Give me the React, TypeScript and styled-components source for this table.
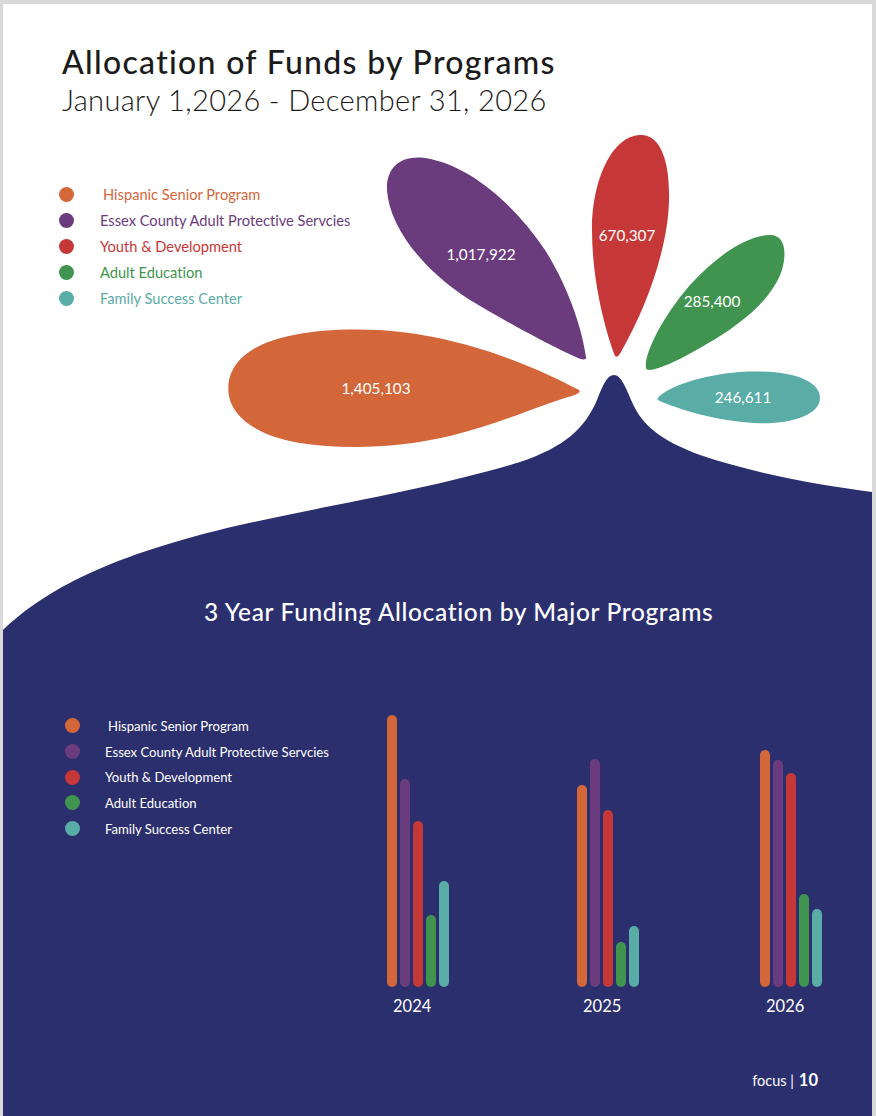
import React from 'react';
import styled, { createGlobalStyle } from 'styled-components';

const NAVY = '#2c2f6e';

const GlobalStyle = createGlobalStyle`
  html, body { margin: 0; padding: 0; background: #d9d9d9; overflow: hidden; }
  body { font-family: Lato, "Open Sans", sans-serif; font-variant-ligatures: none; }
  #root { width: 876px; height: 1116px; }
`;

type Program = { name: string; color: string; indent: number };

const programs: Program[] = [
  { name: 'Hispanic Senior Program', color: '#d3673a', indent: 3 },
  { name: 'Essex County Adult Protective Servcies', color: '#6a3c7d', indent: 0 },
  { name: 'Youth & Development', color: '#c63737', indent: 0 },
  { name: 'Adult Education', color: '#41944f', indent: 0 },
  { name: 'Family Success Center', color: '#5aaca7', indent: 0 },
];

const years = [
  { year: '2024', gap: 0, heights: [272, 208, 166, 72, 106] },
  { year: '2025', gap: 128, heights: [202, 228, 177, 45, 61] },
  { year: '2026', gap: 121, heights: [237, 227, 214, 93, 78] },
];

const Page = styled.div`
  margin: 4px 0 0 3px;
  width: 869px;
  height: 1112px;
  background: #ffffff;
  display: flex;
  flex-direction: column;
  overflow: hidden;
`;

const Header = styled.header`
  box-sizing: border-box;
  height: 126px;
  padding: 39px 0 0 59px;
  color: #1b1b1b;
`;

const Title = styled.h1`
  margin: 0;
  font-size: 32px;
  line-height: 38px;
  font-weight: 500;
  letter-spacing: 1.3px;
  white-space: nowrap;
`;

const Subtitle = styled.h2`
  margin: 1px 0 0;
  font-size: 29px;
  line-height: 35px;
  font-weight: 300;
  letter-spacing: 0.35px;
  white-space: nowrap;
`;

const Stage = styled.section`
  display: grid;
  grid-template-areas: 'stack';
  height: 520px;
  & > * { grid-area: stack; }
`;

const FlowerSvg = styled.svg`
  display: block;
  width: 869px;
  height: 520px;
`;

const Legend = styled.ul<{ $size: number; $rowH: number; $gap: number }>`
  list-style: none;
  margin: 0;
  padding: 0;
  align-self: start;
  justify-self: start;
  display: flex;
  flex-direction: column;
  font-size: ${p => p.$size}px;
  & > li {
    height: ${p => p.$rowH}px;
    gap: ${p => p.$gap}px;
  }
`;

const TopLegend = styled(Legend)`
  margin: 52px 0 0 56px;
`;

const LegendItem = styled.li<{ $color: string; $indent: number; $light?: boolean }>`
  display: flex;
  align-items: center;
  color: ${p => (p.$light ? '#ffffff' : p.$color)};
  white-space: nowrap;
  & > span:last-child { padding-left: ${p => p.$indent}px; }
`;

const Dot = styled.span<{ $color: string }>`
  flex: none;
  width: 15px;
  height: 15px;
  border-radius: 50%;
  background: ${p => p.$color};
`;

const SectionTitle = styled.h3`
  align-self: end;
  justify-self: start;
  margin: 0 0 24px 201px;
  font-size: 24.5px;
  line-height: 28px;
  font-weight: 500;
  letter-spacing: 0.65px;
  color: #ffffff;
  white-space: nowrap;
`;

const NavySection = styled.section`
  flex: 1;
  background: ${NAVY};
  padding-top: 63px;
  display: flex;
  flex-direction: column;
`;

const ChartRow = styled.div`
  display: flex;
  align-items: flex-start;
`;

const BottomLegend = styled(Legend)`
  margin-left: 62px;
  width: 322px;
`;

const Chart = styled.div`
  display: flex;
  margin-top: 2px;
`;

const Group = styled.div<{ $gap: number }>`
  display: flex;
  flex-direction: column;
  margin-left: ${p => p.$gap}px;
`;

const Bars = styled.div`
  display: flex;
  align-items: flex-end;
  gap: 3px;
  height: 272px;
`;

const Bar = styled.div<{ $color: string }>`
  width: 10px;
  border-radius: 5px;
  background: ${p => p.$color};
`;

const YearLabel = styled.div`
  margin-top: 9px;
  padding-left: 6px;
  font-size: 16.5px;
  line-height: 20px;
  color: #ffffff;
`;

const Footer = styled.footer`
  margin-top: 54px;
  padding-right: 54px;
  display: flex;
  justify-content: flex-end;
  align-items: baseline;
  color: #ffffff;
  font-size: 14.5px;
  line-height: 20px;
`;

const PageNum = styled.strong`
  font-size: 16.5px;
  font-weight: 700;
  margin-left: 5px;
`;

const petals = [
  {
    color: '#d3673a',
    d: 'M 577 389 C 545 372, 470 336, 380 330 C 320 327, 275 335, 252 350 C 232 362, 226 380, 229 396 C 233 418, 258 436, 300 443 C 345 450, 400 448, 450 436 C 500 424, 545 403, 572 396 C 580 393, 582 391, 577 389 Z',
    label: '1,405,103', x: 376, y: 388,
  },
  {
    color: '#6a3c7d',
    d: 'M 586 357 C 582 330, 570 290, 545 250 C 515 205, 470 165, 425 158 C 400 155, 386 168, 387 190 C 389 225, 420 268, 470 300 C 520 330, 560 350, 578 358 C 582 360, 587 360, 586 357 Z',
    label: '1,017,922', x: 481, y: 254,
  },
  {
    color: '#c63737',
    d: 'M 615 356 C 605 330, 592 280, 592 230 C 592 180, 612 136, 640 135 C 662 134, 670 165, 669 200 C 668 250, 645 310, 622 350 C 619 356, 617 358, 615 356 Z',
    label: '670,307', x: 627, y: 235,
  },
  {
    color: '#41944f',
    d: 'M 646 368 C 644 355, 660 320, 690 285 C 720 252, 750 235, 770 235 C 785 235, 787 252, 782 270 C 772 300, 740 325, 705 345 C 680 360, 660 369, 650 370 C 647 370, 646 369, 646 368 Z',
    label: '285,400', x: 712, y: 301,
  },
  {
    color: '#5aaca7',
    d: 'M 658 398 C 665 388, 700 375, 740 372 C 790 369, 820 380, 820 398 C 820 415, 790 425, 755 423 C 715 421, 675 408, 660 401 C 657 400, 657 399, 658 398 Z',
    label: '246,611', x: 743, y: 397,
  },
];

const wave =
  'M 3 650 L 3 630 C 45 590, 110 555, 240 525 C 330 505, 440 487, 520 462 C 565 447, 585 428, 597 400 C 603 385, 607 375, 614 375 C 621 375, 626 388, 632 402 C 642 425, 660 440, 700 455 C 760 475, 820 485, 872 492 L 872 650 Z';

function Flower() {
  return (
    <FlowerSvg viewBox="3 130 869 520" aria-label="Allocation chart">
      <path d={wave} fill={NAVY} />
      {petals.map(p => (
        <g key={p.label}>
          <path d={p.d} fill={p.color} />
          <text
            x={p.x}
            y={p.y}
            fill="#ffffff"
            fontFamily="Lato, 'Open Sans', sans-serif"
            fontSize="15.3"
            textAnchor="middle"
            dominantBaseline="central"
          >
            {p.label}
          </text>
        </g>
      ))}
    </FlowerSvg>
  );
}

export default function App() {
  return (
    <>
      <GlobalStyle />
      <Page>
        <Header>
          <Title>Allocation of Funds by Programs</Title>
          <Subtitle>January 1,2026 - December 31, 2026</Subtitle>
        </Header>
        <Stage>
          <Flower />
          <TopLegend $size={14.65} $rowH={25.8} $gap={26}>
            {programs.map(p => (
              <LegendItem key={p.name} $color={p.color} $indent={p.indent}>
                <Dot $color={p.color} />
                <span>{p.name}</span>
              </LegendItem>
            ))}
          </TopLegend>
          <SectionTitle>3 Year Funding Allocation by Major Programs</SectionTitle>
        </Stage>
        <NavySection>
          <ChartRow>
            <BottomLegend $size={13.1} $rowH={25.7} $gap={25}>
              {programs.map(p => (
                <LegendItem key={p.name} $color={p.color} $indent={p.indent} $light>
                  <Dot $color={p.color} />
                  <span>{p.name}</span>
                </LegendItem>
              ))}
            </BottomLegend>
            <Chart>
              {years.map(y => (
                <Group key={y.year} $gap={y.gap}>
                  <Bars>
                    {y.heights.map((h, i) => (
                      <Bar key={i} $color={programs[i].color} style={{ height: h }} />
                    ))}
                  </Bars>
                  <YearLabel>{y.year}</YearLabel>
                </Group>
              ))}
            </Chart>
          </ChartRow>
          <Footer>
            focus |<PageNum>10</PageNum>
          </Footer>
        </NavySection>
      </Page>
    </>
  );
}
